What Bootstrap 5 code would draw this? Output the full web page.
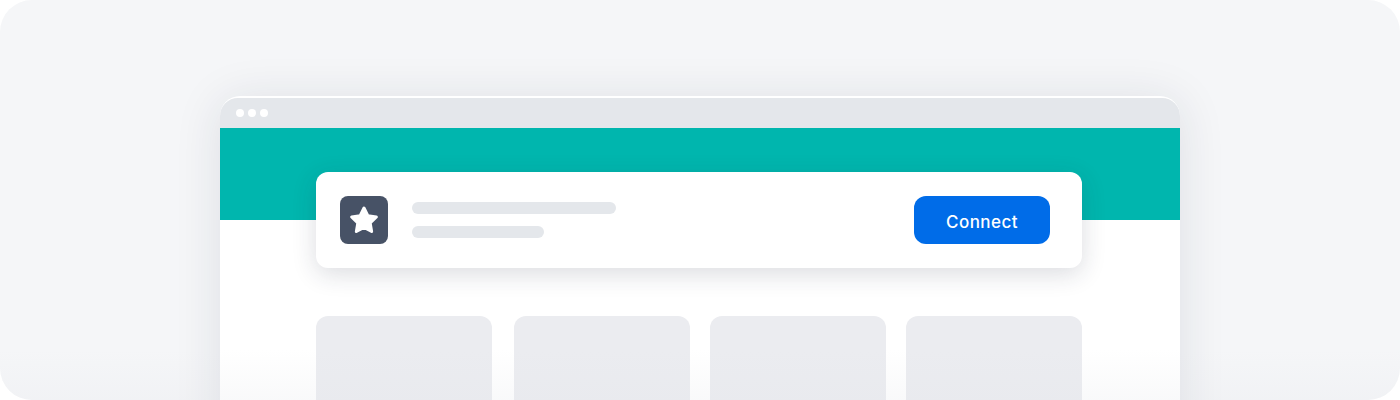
<!DOCTYPE html>
<html lang="en">
<head>
  <meta charset="UTF-8">
  <meta name="viewport" content="width=device-width, initial-scale=1.0">
  <title>Connect</title>
  <link rel="stylesheet" href="https://cdn.jsdelivr.net/npm/bootstrap@5.3.0/dist/css/bootstrap.min.css">
  <style>
    body {
      background: #fff;
      font-family: Inter, sans-serif;
    }

    .stage {
      height: 400px;
      padding-top: 96px;
      background: #f5f6f8;
      border-radius: 32px;
      overflow: hidden;
    }

    .stage-fade {
      left: 0;
      right: 0;
      bottom: 0;
      height: 50px;
      background: linear-gradient(rgba(225, 227, 232, 0), rgba(225, 227, 232, .2));
    }

    .window {
      width: 960px;
      height: 400px;
      background: #fff;
      border-top: 2px solid #fff;
      border-radius: 20px 20px 0 0;
      box-shadow: 0 4px 48px rgba(30, 40, 60, .11);
    }

    .window-bar {
      height: 30px;
      padding-left: 16px;
      background: #e4e7eb;
      border-radius: 18px 18px 0 0;
    }

    .window-dot {
      width: 8px;
      height: 8px;
      background: #fff;
      border-radius: 50%;
    }

    .hero {
      height: 92px;
      padding: 44px 98px 0 96px;
      background: #00b6ae;
    }

    .connect-card {
      height: 96px;
      padding: 24px 32px 24px 24px;
      background: #fff;
      border-radius: 12px;
      box-shadow: 0 6px 24px rgba(30, 40, 60, .16);
    }

    .star-box {
      width: 48px;
      height: 48px;
      background: #475266;
      border-radius: 8px;
    }

    .line-stack {
      gap: 12px;
      margin-left: 24px;
    }

    .line-one,
    .line-two {
      height: 12px;
      background: #e4e7eb;
      border-radius: 6px;
    }

    .line-one {
      width: 204px;
    }

    .line-two {
      width: 132px;
    }

    .btn-connect {
      width: 136px;
      height: 48px;
      padding: 5px 0 0;
      font-family: Inter, sans-serif;
      font-size: 17px;
      font-weight: 500;
      letter-spacing: .45px;
      color: #fff;
      background: #006ce8;
      border: 0;
      border-radius: 12px;
    }

    .tiles {
      padding: 96px 98px 0 96px;
      gap: 20px;
    }

    .tile {
      width: 176px;
      height: 120px;
      background: #ebecf0;
      border-radius: 12px;
    }

    .tile:first-child {
      margin-right: 2px;
    }
  </style>
</head>
<body>
  <div class="stage position-relative d-flex justify-content-center">
    <div class="window flex-shrink-0">
      <div class="window-bar d-flex align-items-center gap-1">
        <span class="window-dot"></span>
        <span class="window-dot"></span>
        <span class="window-dot"></span>
      </div>
      <div class="hero">
        <div class="connect-card d-flex align-items-center">
          <div class="star-box d-flex align-items-center justify-content-center flex-shrink-0">
            <svg width="30" height="30" viewBox="0 0 30 30">
              <path d="M15 3L18.82 10.74L27.36 11.98L21.18 18.01L22.64 26.52L15 22.5L7.36 26.52L8.82 18.01L2.64 11.98L11.18 10.74Z" fill="#fff" stroke="#fff" stroke-width="3" stroke-linejoin="round"/>
            </svg>
          </div>
          <div class="line-stack d-flex flex-column flex-grow-1">
            <div class="line-one"></div>
            <div class="line-two"></div>
          </div>
          <button class="btn btn-connect" type="button">Connect</button>
        </div>
      </div>
      <div class="tiles d-flex">
        <div class="tile"></div>
        <div class="tile"></div>
        <div class="tile"></div>
        <div class="tile"></div>
      </div>
    </div>
    <div class="stage-fade position-absolute"></div>
  </div>
</body>
</html>
